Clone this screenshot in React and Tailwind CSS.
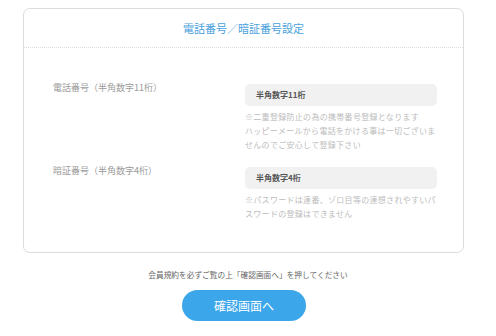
import React from 'react';

const FONT = { fontFamily: '"Noto Sans CJK JP", "Noto Sans", sans-serif' };

const FIELDS = [
    {
        label: '電話番号（半角数字11桁）',
        placeholder: '半角数字11桁',
        notes: ['※二重登録防止の為の携帯番号登録となります', 'ハッピーメールから電話をかける事は一切ございま', 'せんのでご安心して登録下さい'],
    },
    {
        label: '暗証番号（半角数字4桁）',
        placeholder: '半角数字4桁',
        notes: ['※パスワードは連番、ゾロ目等の連想されやすいパ', 'スワードの登録はできません'],
    },
];

const FieldRow = ({ field }) => (
    <div className="flex">
        <div className="w-[192px] shrink-0 text-[9px] leading-[14px] text-[#9a9a9a] pt-[1px]">{field.label}</div>
        <div className="w-[192px] mt-[4px]">
            <div className="h-[22px] rounded-[5px] bg-[#f1f1f1] flex items-center pl-[11px] text-[8px] font-bold text-[#555]">
                {field.placeholder}
            </div>
            <div className="mt-[4px] text-[8px] leading-[14px] tracking-[0.3px] text-[#bcbcbc] whitespace-nowrap overflow-hidden">
                {field.notes.map((n, i) => (
                    <div key={i}>{n}</div>
                ))}
            </div>
        </div>
    </div>
);

export default function App() {
    return (
        <div className="w-[496px] h-[336px] bg-white overflow-hidden pt-[8px]" style={FONT}>
            <div className="ml-[23px] w-[441px] rounded-[7px] border border-[#dcdcdc]">
                <div className="h-[39px] flex items-center justify-center border-b border-dotted border-[#dedede] text-[11px] text-[#4aa2dd]">
                    電話番号／暗証番号設定
                </div>
                <div className="pl-[29px] pt-[32px] pb-[31px] flex flex-col gap-[11px]">
                    {FIELDS.map((f, i) => (
                        <FieldRow key={i} field={f} />
                    ))}
                </div>
            </div>
            <div className="mt-[16px] text-center text-[7.7px] leading-[12px] text-[#666]">
                会員規約を必ずご覧の上「確認画面へ」を押してください
            </div>
            <div className="mt-[9px] flex justify-center pr-[8px]">
                <button className="w-[124px] h-[31px] rounded-full bg-[#3ca6ea] text-white text-[12px]">確認画面へ</button>
            </div>
        </div>
    );
}
